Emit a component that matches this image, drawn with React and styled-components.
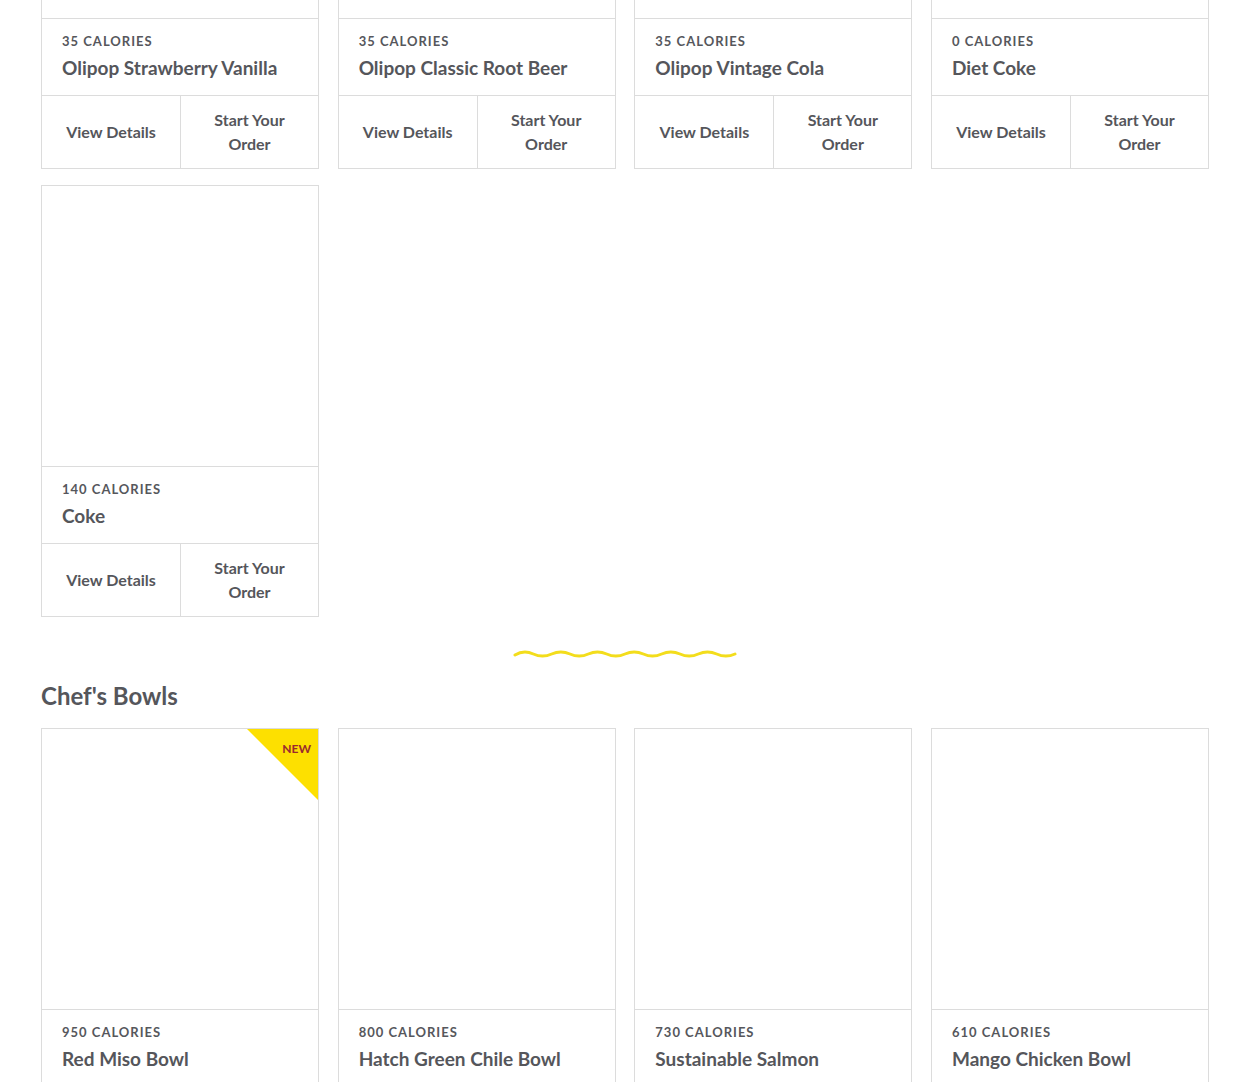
import React from "react";
import styled, { createGlobalStyle } from "styled-components";

const Global = createGlobalStyle`
  html, body { margin: 0; padding: 0; background: #fff; }
  body { font-family: "Lato", "Open Sans", sans-serif; color: #55565b; overflow: hidden; }
  * { box-sizing: border-box; }
`;

const Page = styled.div`
  width: 1250px;
  height: 1082px;
  overflow: hidden;
  padding: 0 41px;
`;

const Inner = styled.div`
  margin-top: -263px;
`;

const Grid = styled.div`
  display: grid;
  grid-template-columns: repeat(4, 1fr);
  column-gap: 18.67px;
  row-gap: 16px;
`;

const Card = styled.div`
  position: relative;
  border: 1px solid #dcdcdc;
  background: #fff;
  display: flex;
  flex-direction: column;
`;

const ImageArea = styled.div`
  height: 281px;
  border-bottom: 1px solid #dcdcdc;
  background: #fff;
`;

const Info = styled.div`
  padding: 14px 20px 15px;
  border-bottom: 1px solid #dcdcdc;
`;

const Calories = styled.div`
  font-size: 13px;
  line-height: 16px;
  font-weight: 700;
  letter-spacing: 1px;
  text-transform: uppercase;
  color: #56575c;
`;

const Name = styled.div`
  margin-top: 7px;
  font-size: 19px;
  line-height: 24px;
  font-weight: 700;
  color: #55565b;
  white-space: nowrap;
`;

const Actions = styled.div`
  display: grid;
  grid-template-columns: 1fr 1fr;
  height: 72px;
`;

const Action = styled.div`
  display: flex;
  align-items: center;
  justify-content: center;
  text-align: center;
  font-size: 16px;
  line-height: 24px;
  font-weight: 700;
  color: #55565b;
  padding: 0 22px;
  & + & { border-left: 1px solid #dcdcdc; }
`;

const Badge = styled.div`
  position: absolute;
  top: 0;
  right: 0;
  width: 71px;
  height: 71px;
  background: #fde000;
  clip-path: polygon(0 0, 100% 0, 100% 100%);
`;

const BadgeText = styled.span`
  position: absolute;
  top: 12px;
  right: 7px;
  font-size: 12px;
  font-weight: 700;
  color: #9a2a2f;
`;

const Divider = styled.div`
  display: flex;
  justify-content: center;
  margin-top: 31px;
  height: 12px;
`;

const Heading = styled.h2`
  margin: 20px 0 16px;
  font-size: 24px;
  line-height: 32px;
  font-weight: 700;
  color: #55565b;
`;

function wavePath(width, periods) {
  const q = width / periods;
  let d = `M2 7`;
  for (let i = 0; i < periods; i++) {
    const x = 2 + i * q;
    d += ` C${x + q * 0.18} 3, ${x + q * 0.32} 3, ${x + q * 0.5} 6`;
    d += ` C${x + q * 0.68} 9, ${x + q * 0.82} 9, ${x + q} 6`;
  }
  return d;
}

function Wave() {
  const w = 224;
  return (
    <svg width={w} height={12} viewBox={`0 0 ${w} 12`}>
      <path d={wavePath(w - 4, 6)} fill="none" stroke="#f3dd1c" strokeWidth="3" strokeLinecap="round" />
    </svg>
  );
}

function ProductCard({ calories, name, isNew }) {
  return (
    <Card>
      <ImageArea />
      {isNew && (
        <Badge>
          <BadgeText>NEW</BadgeText>
        </Badge>
      )}
      <Info>
        <Calories>{calories} Calories</Calories>
        <Name>{name}</Name>
      </Info>
      <Actions>
        <Action>View Details</Action>
        <Action>Start Your Order</Action>
      </Actions>
    </Card>
  );
}

const drinks = [
  { calories: 35, name: "Olipop Strawberry Vanilla" },
  { calories: 35, name: "Olipop Classic Root Beer" },
  { calories: 35, name: "Olipop Vintage Cola" },
  { calories: 0, name: "Diet Coke" },
  { calories: 140, name: "Coke" },
];

const bowls = [
  { calories: 950, name: "Red Miso Bowl", isNew: true },
  { calories: 800, name: "Hatch Green Chile Bowl" },
  { calories: 730, name: "Sustainable Salmon" },
  { calories: 610, name: "Mango Chicken Bowl" },
];

export default function App() {
  return (
    <>
      <Global />
      <Page>
        <Inner>
          <Grid>
            {drinks.map((d) => (
              <ProductCard key={d.name} {...d} />
            ))}
          </Grid>
          <Divider>
            <Wave />
          </Divider>
          <Heading>Chef's Bowls</Heading>
          <Grid>
            {bowls.map((d) => (
              <ProductCard key={d.name} {...d} />
            ))}
          </Grid>
        </Inner>
      </Page>
    </>
  );
}
